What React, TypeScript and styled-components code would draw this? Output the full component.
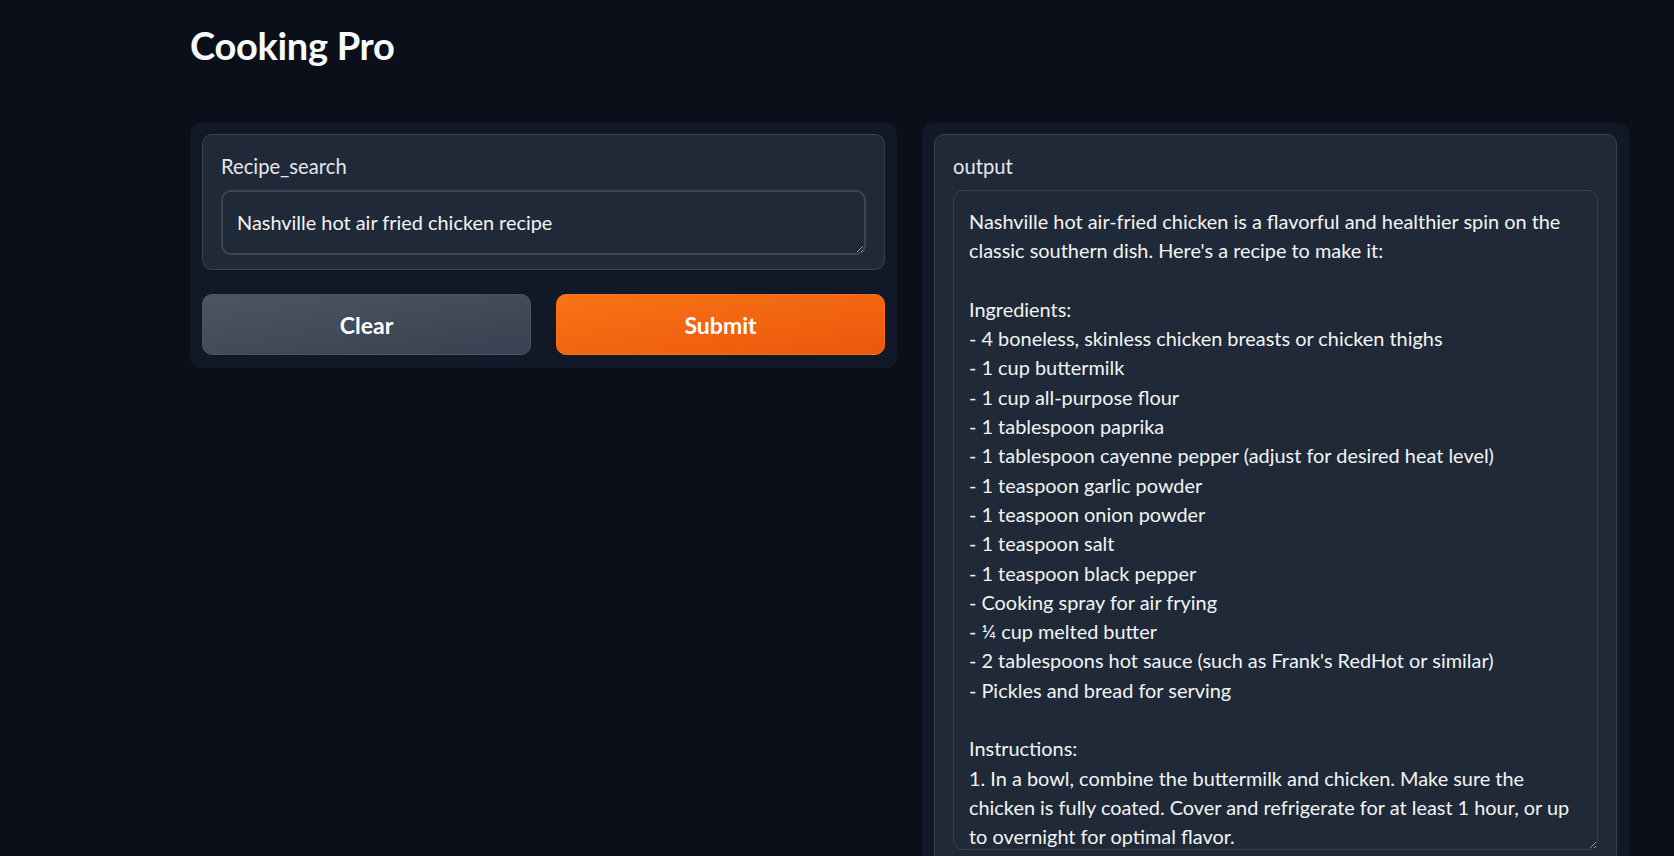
import styled, { createGlobalStyle } from "styled-components";

const GlobalStyle = createGlobalStyle`
  html, body {
    margin: 0;
    padding: 0;
    background: #0b0f19;
  }
  body {
    font-family: Lato, "Noto Sans", "Liberation Sans", sans-serif;
    color: #f3f4f6;
    overflow: hidden;
  }
`;

const Page = styled.div`
  height: 856px;
  padding: 0 45px 0 190px;
  box-sizing: border-box;
  overflow: hidden;
`;

const Title = styled.h1`
  margin: 0;
  padding-top: 22px;
  height: 123px;
  box-sizing: border-box;
  font-size: 38px;
  font-weight: 700;
  letter-spacing: -0.3px;
  color: #f9fafb;
`;

const Row = styled.div`
  display: flex;
  gap: 25px;
  align-items: flex-start;
`;

const Panel = styled.div<{ $tall?: boolean }>`
  flex: 1;
  background: #111827;
  border-radius: 11px;
  padding: 11px 12px 13px;
  box-sizing: border-box;
  display: flex;
  flex-direction: column;
  gap: 24px;
  min-height: ${(p) => (p.$tall ? "760px" : "auto")};
`;

const Block = styled.div`
  background: #1f2937;
  border: 1px solid #374151;
  border-radius: 10px;
  padding: 18px 18px 14px 18px;
  display: flex;
  flex-direction: column;
  gap: 11px;
`;

const Label = styled.span`
  font-size: 20.2px;
  color: #e5e7eb;
  line-height: 26px;
`;

const Field = styled.textarea<{ $height: number }>`
  font-family: Lato, "Noto Sans", "Liberation Sans", sans-serif;
  background: #1f2937;
  color: #f3f4f6;
  border: 2px solid #3b4554;
  border-radius: 10px;
  padding: 16px 14px;
  font-size: 19.9px;
  line-height: 29.3px;
  box-sizing: border-box;
  width: 100%;
  height: ${(p) => p.$height}px;
  white-space: pre;
  overflow: hidden;
  outline: none;
  resize: vertical;
  margin: 0;
  display: block;
  caret-color: #f3f4f6;
`;

const OutputField = styled(Field)`
  border-width: 1px;
  border-color: #374151;
  padding: 16px 15px;
`;

const Buttons = styled.div`
  display: flex;
  gap: 25px;
`;

const Button = styled.button<{ $primary?: boolean }>`
  flex: 1;
  height: 61px;
  border-radius: 10px;
  font-family: Lato, "Noto Sans", "Liberation Sans", sans-serif;
  font-size: 23px;
  font-weight: 700;
  color: #ffffff;
  cursor: pointer;
  border: 1px solid ${(p) => (p.$primary ? "#f97316" : "#4b5563")};
  background: ${(p) =>
    p.$primary
      ? "linear-gradient(to bottom right, #f97316, #ea580c)"
      : "linear-gradient(to bottom right, #4b5563, #374151)"};
`;

const outputText = `Nashville hot air-fried chicken is a flavorful and healthier spin on the
classic southern dish. Here's a recipe to make it:

Ingredients:
- 4 boneless, skinless chicken breasts or chicken thighs
- 1 cup buttermilk
- 1 cup all-purpose flour
- 1 tablespoon paprika
- 1 tablespoon cayenne pepper (adjust for desired heat level)
- 1 teaspoon garlic powder
- 1 teaspoon onion powder
- 1 teaspoon salt
- 1 teaspoon black pepper
- Cooking spray for air frying
- ¼ cup melted butter
- 2 tablespoons hot sauce (such as Frank's RedHot or similar)
- Pickles and bread for serving

Instructions:
1. In a bowl, combine the buttermilk and chicken. Make sure the
chicken is fully coated. Cover and refrigerate for at least 1 hour, or up
to overnight for optimal flavor.`;

export default function App() {
  return (
    <>
      <GlobalStyle />
      <Page>
        <Title>Cooking Pro</Title>
        <Row>
          <Panel>
            <Block>
              <Label>Recipe_search</Label>
              <Field $height={65} defaultValue="Nashville hot air fried chicken recipe" />
            </Block>
            <Buttons>
              <Button>Clear</Button>
              <Button $primary>Submit</Button>
            </Buttons>
          </Panel>
          <Panel $tall>
            <Block>
              <Label>output</Label>
              <OutputField $height={660} readOnly value={outputText} />
            </Block>
          </Panel>
        </Row>
      </Page>
    </>
  );
}
